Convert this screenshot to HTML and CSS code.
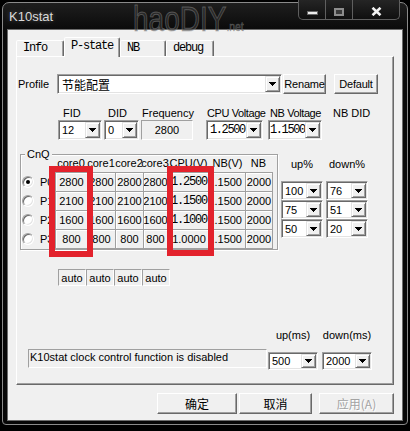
FILE: index.html
```html
<!DOCTYPE html>
<html lang="zh-CN">
<head>
<meta charset="utf-8">
<title>K10stat</title>
<link rel="stylesheet" href="styles.css">
</head>
<body>
<div class="win">
  <div class="frame">
    <div class="titlebar">
      <span class="title">K10stat</span>
      <div class="caps">
        <div class="cap min"><i></i></div>
        <div class="cap max"><i></i></div>
        <div class="cap close"><svg width="11" height="9" viewBox="0 0 11 9"><path d="M1.5 0.8L9.5 8.2M9.5 0.8L1.5 8.2" stroke="#f2f2f2" stroke-width="2.6" fill="none"/></svg></div>
      </div>
    </div>
    <div class="client">
      <div class="tabs">
        <div class="tab t-info">Info</div>
        <div class="tab sel t-pstate">P-state</div>
        <div class="tab t-nb">NB</div>
        <div class="tab t-debug">debug</div>
      </div>
      <div class="panel">
        <div class="row-profile">
          <span class="profile-lbl">Profile</span>
          <div class="combo w-profile"><span class="val cjk">节能配置</span><span class="drop"><svg class="arr" width="7" height="4" viewBox="0 0 7 4"><path d="M0 0h7v1h-1v1h-1v1h-1v1h-1v-1h-1v-1h-1v-1h-1z"/></svg></span></div>
          <div class="btn rename">Rename</div>
          <div class="btn default">Default</div>
        </div>

        <div class="fid-grid">
          <span></span>
          <span class="lbl l-fid">FID</span>
          <span class="lbl l-did">DID</span>
          <span class="lbl l-freq">Frequency</span>
          <span class="lbl l-cpuv">CPU Voltage</span>
          <span class="lbl l-nbv">NB Voltage</span>
          <span class="lbl l-nbdid">NB DID</span>

          <span></span>
          <div class="combo w-fid"><span class="val">12</span><span class="drop"><svg class="arr" width="7" height="4" viewBox="0 0 7 4"><path d="M0 0h7v1h-1v1h-1v1h-1v1h-1v-1h-1v-1h-1v-1h-1z"/></svg></span></div>
          <div class="combo w-did"><span class="val">0</span><span class="drop"><svg class="arr" width="7" height="4" viewBox="0 0 7 4"><path d="M0 0h7v1h-1v1h-1v1h-1v1h-1v-1h-1v-1h-1v-1h-1z"/></svg></span></div>
          <div class="field w-freq">2800</div>
          <div class="combo w-cpuv"><span class="val mono">1.2500</span><span class="drop"><svg class="arr" width="7" height="4" viewBox="0 0 7 4"><path d="M0 0h7v1h-1v1h-1v1h-1v1h-1v-1h-1v-1h-1v-1h-1z"/></svg></span></div>
          <div class="combo w-nbv"><span class="val mono">1.1500</span><span class="drop"><svg class="arr" width="7" height="4" viewBox="0 0 7 4"><path d="M0 0h7v1h-1v1h-1v1h-1v1h-1v-1h-1v-1h-1v-1h-1z"/></svg></span></div>
          <span></span>
        </div>

        <div class="cnq-row">
          <div class="group">
            <span class="legend">CnQ</span>
            <div class="radios">
              <div class="rhead"></div>
              <div class="rrow"><span class="radio on"></span><span class="plbl">P0</span></div>
              <div class="rrow"><span class="radio"></span><span class="plbl">P1</span></div>
              <div class="rrow"><span class="radio"></span><span class="plbl">P2</span></div>
              <div class="rrow"><span class="radio"></span><span class="plbl">P3</span></div>
            </div>
            <div class="tbl">
              <div class="thead">
                <span>core0</span><span>core1</span><span>core2</span><span>core3</span><span>CPU(V)</span><span>NB(V)</span><span>NB</span>
              </div>
              <div class="tgrid">
                <span class="cell">2800</span><span class="cell">2800</span><span class="cell">2800</span><span class="cell">2800</span><span class="cell mono">1.2500</span><span class="cell end">1.1500</span><span class="cell">2000</span>
                <span class="cell">2100</span><span class="cell">2100</span><span class="cell">2100</span><span class="cell">2100</span><span class="cell mono">1.1500</span><span class="cell end">1.1500</span><span class="cell">2000</span>
                <span class="cell">1600</span><span class="cell">1600</span><span class="cell">1600</span><span class="cell">1600</span><span class="cell mono">1.1000</span><span class="cell end">1.1500</span><span class="cell">2000</span>
                <span class="cell">800</span><span class="cell">800</span><span class="cell">800</span><span class="cell">800</span><span class="cell">1.0000</span><span class="cell end">1.1500</span><span class="cell">2000</span>
              </div>
            </div>
          </div>
          <div class="updown">
            <div class="udhead"><span>up%</span><span>down%</span></div>
            <div class="udrows">
              <div class="udrow">
                <div class="combo w-ud h19"><span class="val">100</span><span class="drop"><svg class="arr" width="7" height="4" viewBox="0 0 7 4"><path d="M0 0h7v1h-1v1h-1v1h-1v1h-1v-1h-1v-1h-1v-1h-1z"/></svg></span></div>
                <div class="combo w-ud h19"><span class="val">76</span><span class="drop"><svg class="arr" width="7" height="4" viewBox="0 0 7 4"><path d="M0 0h7v1h-1v1h-1v1h-1v1h-1v-1h-1v-1h-1v-1h-1z"/></svg></span></div>
              </div>
              <div class="udrow">
                <div class="combo w-ud h19"><span class="val">75</span><span class="drop"><svg class="arr" width="7" height="4" viewBox="0 0 7 4"><path d="M0 0h7v1h-1v1h-1v1h-1v1h-1v-1h-1v-1h-1v-1h-1z"/></svg></span></div>
                <div class="combo w-ud h19"><span class="val">51</span><span class="drop"><svg class="arr" width="7" height="4" viewBox="0 0 7 4"><path d="M0 0h7v1h-1v1h-1v1h-1v1h-1v-1h-1v-1h-1v-1h-1z"/></svg></span></div>
              </div>
              <div class="udrow">
                <div class="combo w-ud h19"><span class="val">50</span><span class="drop"><svg class="arr" width="7" height="4" viewBox="0 0 7 4"><path d="M0 0h7v1h-1v1h-1v1h-1v1h-1v-1h-1v-1h-1v-1h-1z"/></svg></span></div>
                <div class="combo w-ud h19"><span class="val">20</span><span class="drop"><svg class="arr" width="7" height="4" viewBox="0 0 7 4"><path d="M0 0h7v1h-1v1h-1v1h-1v1h-1v-1h-1v-1h-1v-1h-1z"/></svg></span></div>
              </div>
            </div>
          </div>
        </div>

        <div class="autos">
          <span class="field auto">auto</span><span class="field auto">auto</span><span class="field auto">auto</span><span class="field auto">auto</span>
        </div>

        <div class="ms-labels"><span>up(ms)</span><span>down(ms)</span></div>
        <div class="bottom-row">
          <div class="field status">K10stat clock control function is disabled</div>
          <div class="combo w-ms h18 first"><span class="val">500</span><span class="drop"><svg class="arr" width="7" height="4" viewBox="0 0 7 4"><path d="M0 0h7v1h-1v1h-1v1h-1v1h-1v-1h-1v-1h-1v-1h-1z"/></svg></span></div>
          <div class="combo w-ms h18 second"><span class="val">2000</span><span class="drop"><svg class="arr" width="7" height="4" viewBox="0 0 7 4"><path d="M0 0h7v1h-1v1h-1v1h-1v1h-1v-1h-1v-1h-1v-1h-1z"/></svg></span></div>
        </div>
      </div>
      <div class="dlg-btns">
        <div class="btn dbtn ok cjk">确定</div>
        <div class="btn dbtn cancel cjk">取消</div>
        <div class="btn dbtn apply cjk disabled">应用(A)</div>
      </div>
    </div>
  </div>
  <div class="watermark">haoDIY<span>.net</span></div>
  <div class="mark mark1"></div>
  <div class="mark mark2"></div>
</div>
</body>
</html>
```

FILE: styles.css
```css
* { box-sizing: border-box; }
html, body { margin: 0; padding: 0; background: #000; }
body {
  width: 410px; height: 431px; overflow: hidden;
  font-family: "Liberation Sans", Arial, sans-serif;
  font-size: 11px; color: #000;
}

.win {
  position: relative;
  width: 410px; height: 431px;
  padding: 2px 2px 6px;
  background: #000;
}
.frame {
  height: 100%;
  display: flex; flex-direction: column;
  border: 1px solid #8a8a8a;
  border-radius: 7px 7px 4px 4px;
  background: linear-gradient(#1e1e1e 0, #0b0b0b 26px, #060606);
}
.titlebar { height: 26px; flex: none; display: flex; align-items: flex-start; }
.title {
  padding-left: 6px; line-height: 28px;
  font-size: 13px; color: #dadada;
  text-shadow: 0 0 5px rgba(255,255,255,.3);
}
.caps { display: flex; height: 20px; margin: -3px 7px 0 auto; }
.cap {
  height: 20px; display: flex; justify-content: center;
  border: 1px solid #5f5f5f; border-top: none; border-left: none;
  background: linear-gradient(#252525, #0f0f0f);
}
.cap.min { width: 28px; border-left: 1px solid #5f5f5f; border-radius: 0 0 0 5px; }
.cap.max { width: 27px; }
.cap.close { width: 47px; border-radius: 0 0 5px 0; }
.cap.min i { display: block; width: 11px; height: 4px; margin-top: 11px; background: #ececec; border: 1px solid #666; }
.cap.max i { display: block; width: 10px; height: 8px; margin-top: 8px; border: 2px solid #8d8d8d; background: #3a3a3a; }
.cap.close svg { margin-top: 7px; }

.client {
  flex: 1;
  margin: 0 4px 3px;
  border: 1px solid #6c6c6c;
  background: #f0f0f0;
  padding: 7px 8px 0;
  display: flex; flex-direction: column;
}

.tabs { display: flex; align-items: flex-end; height: 20px; position: relative; z-index: 1; flex: none; }
.tab {
  height: 16px; margin-bottom: 1px;
  padding-left: 6px; line-height: 15px;
  font-family: "Liberation Mono", monospace; font-size: 12px; letter-spacing: -1.2px;
  border: 1px solid; border-bottom: none;
  border-color: #fff #696969 transparent #fff;
  box-shadow: inset -1px 0 #a0a0a0;
  background: #f0f0f0;
  border-radius: 2px 2px 0 0;
}
.tab.sel { height: 20px; margin-bottom: 0; padding-top: 1px; }
.t-info { width: 48px; }
.t-pstate { width: 56px; }
.t-nb { width: 46px; }
.t-debug { width: 48px; }

.panel {
  height: 329px; flex: none;
  margin-top: -1px;
  border: 1px solid; border-color: #fff #696969 #696969 #fff;
  box-shadow: inset -1px -1px #a0a0a0;
  background: #f0f0f0;
}

.mono { font-family: "Liberation Mono", monospace; font-size: 12px; letter-spacing: -1.4px; }
.cjk { font-family: "Noto Sans CJK SC", "Liberation Sans", sans-serif; font-size: 12px; }

/* controls */
.combo {
  display: flex; align-items: stretch;
  height: 20px; padding: 1px;
  background: #fff;
  border: 1px solid; border-color: #a0a0a0 #fff #fff #a0a0a0;
  box-shadow: inset 1px 1px #696969, inset -1px -1px #e3e3e3;
}
.combo .val {
  flex: 1; min-width: 0;
  display: flex; align-items: center;
  padding-left: 2px; white-space: nowrap; overflow: hidden;
}
.combo .drop {
  width: 15px; flex: none;
  display: flex; align-items: center; justify-content: center;
  background: #f0f0f0;
  border: 1px solid; border-color: #e3e3e3 #696969 #696969 #e3e3e3;
  box-shadow: inset 1px 1px #fff, inset -1px -1px #a0a0a0;
}
.arr { display: block; shape-rendering: crispEdges; }
.arr path { fill: #000; }
.h19 { height: 19px; }
.h18 { height: 18px; }

.field {
  display: flex; align-items: center;
  background: #f0f0f0;
  border: 1px solid; border-color: #a0a0a0 #fff #fff #a0a0a0;
  white-space: nowrap;
}
.btn {
  display: flex; align-items: center; justify-content: center;
  background: #f0f0f0;
  border: 1px solid; border-color: #fff #696969 #696969 #fff;
  box-shadow: inset -1px -1px #a0a0a0;
  white-space: nowrap;
}

/* profile row */
.row-profile { display: flex; height: 20px; margin-top: 17px; }
.profile-lbl { width: 40px; padding-left: 1px; line-height: 20px; }
.w-profile { width: 225px; }
.w-profile .val { padding-left: 3px; }
.rename { width: 43px; margin-left: 1px; letter-spacing: -0.2px; }
.default { width: 44px; margin-left: 8px; letter-spacing: -0.2px; }

/* FID row */
.fid-grid {
  display: grid;
  grid-template-columns: 41px 46px 37px 65px 62px 65px auto;
  grid-template-rows: 13px 20px;
  margin-top: 13px;
}
.lbl { line-height: 13px; white-space: nowrap; }
.l-fid { padding-left: 5px; }
.l-did { padding-left: 4px; }
.l-freq { padding-left: 1px; }
.l-cpuv { padding-left: 1px; letter-spacing: -0.4px; }
.l-nbv { padding-left: 2px; letter-spacing: -0.4px; }
.w-fid { width: 44px; }
.w-did { width: 35px; }
.w-freq { width: 52px; justify-content: center; }
.w-cpuv { width: 57px; }
.w-nbv { width: 54px; }
.w-cpuv .val { padding-left: 2px; }
.w-nbv .val { padding-left: 0; }

/* CnQ */
.cnq-row { display: flex; align-items: flex-start; margin-top: 14px; }
.group {
  position: relative;
  display: flex;
  width: 258px;
  margin-left: 3px;
  border: 1px solid #a0a0a0;
  box-shadow: inset 1px 1px #fff, 1px 1px #fff;
}
.legend {
  position: absolute; left: 4px; top: -7px;
  padding: 0 2px; line-height: 13px;
  background: #f0f0f0;
}
.radios { width: 34px; overflow: hidden; }
.rhead { height: 17px; }
.rrow { height: 19px; display: flex; align-items: center; white-space: nowrap; }
.radio {
  position: relative;
  flex: none;
  width: 12px; height: 12px; margin-left: 1px;
  border-radius: 50%;
  background: #fff;
  border: 1px solid; border-color: #a0a0a0 #fff #fff #a0a0a0;
  box-shadow: inset 1px 1px #696969, inset -1px -1px #e3e3e3;
}
.radio.on::after {
  content: ""; position: absolute; left: 3px; top: 3px;
  width: 4px; height: 4px; border-radius: 50%; background: #000;
}
.plbl { margin-left: 6px; }

.tbl { width: 218px; }
.thead {
  display: grid;
  grid-template-columns: 32px 28px 28px 24px 43px 35px 27px;
  height: 17px;
}
.thead span { display: flex; justify-content: center; align-items: center; white-space: nowrap; line-height: 17px; }
.tgrid {
  display: grid;
  grid-template-columns: 32px 28px 28px 24px 43px 35px 27px;
  grid-auto-rows: 19px;
  border-right: 1px solid #a0a0a0;
  border-bottom: 1px solid #a0a0a0;
}
.cell {
  display: flex; align-items: center; justify-content: center;
  overflow: hidden; white-space: nowrap;
  border-left: 1px solid #a0a0a0; border-top: 1px solid #a0a0a0;
  box-shadow: inset 1px 1px #fff;
}
.cell.mono { letter-spacing: -1.2px; }
.cell.end { justify-content: flex-end; padding-right: 3px; }

.updown { margin-left: 3px; padding-top: 1px; }
.udhead { display: flex; gap: 3px; height: 17px; }
.udhead span { width: 42px; display: flex; justify-content: center; align-items: center; white-space: nowrap; }
.udrows { margin-top: 9px; }
.udrow { display: flex; gap: 3px; }
.w-ud { width: 42px; }

/* auto row */
.autos { display: flex; margin-top: 19px; margin-left: 41px; }
.auto { width: 28px; height: 17px; justify-content: center; }

/* ms */
.ms-labels { display: flex; gap: 4px; margin-top: 43px; margin-left: 251px; height: 13px; }
.ms-labels span { width: 50px; display: flex; justify-content: center; line-height: 13px; white-space: nowrap; }
.bottom-row { display: flex; align-items: flex-start; margin-top: 7px; }
.status { width: 239px; height: 19px; margin-left: 11px; padding-left: 1px; align-items: flex-start; line-height: 15px; }
.w-ms { width: 50px; margin-top: 3px; }
.w-ms.first { margin-left: 1px; }
.w-ms.second { margin-left: 4px; }

/* dialog buttons */
.dlg-btns { display: flex; justify-content: flex-end; margin-top: 8px; flex: none; }
.dbtn { height: 21px; }
.ok { width: 80px; margin-right: 2px; }
.cancel { width: 73px; margin-right: 7px; }
.apply { width: 75px; }
.disabled { color: #a3a3a3; text-shadow: 1px 1px 0 #fff; }

/* overlays */
.watermark {
  position: absolute; left: 133px; top: 1px;
  font-family: "Liberation Sans", sans-serif;
  font-size: 35px; line-height: 36px;
  color: rgba(60,60,60,.5);
  -webkit-text-stroke: 1px rgba(150,150,150,.45);
  transform: scaleX(0.8); transform-origin: left top;
  white-space: nowrap;
  pointer-events: none;
}
.watermark span { font-size: 13px; -webkit-text-stroke: 0.6px rgba(150,150,150,.5); }
.mark { position: absolute; border: 6px solid #e3222c; }
.mark1 { left: 49px; top: 166px; width: 44px; height: 91px; }
.mark2 { left: 167px; top: 166px; width: 47px; height: 90px; }
```
